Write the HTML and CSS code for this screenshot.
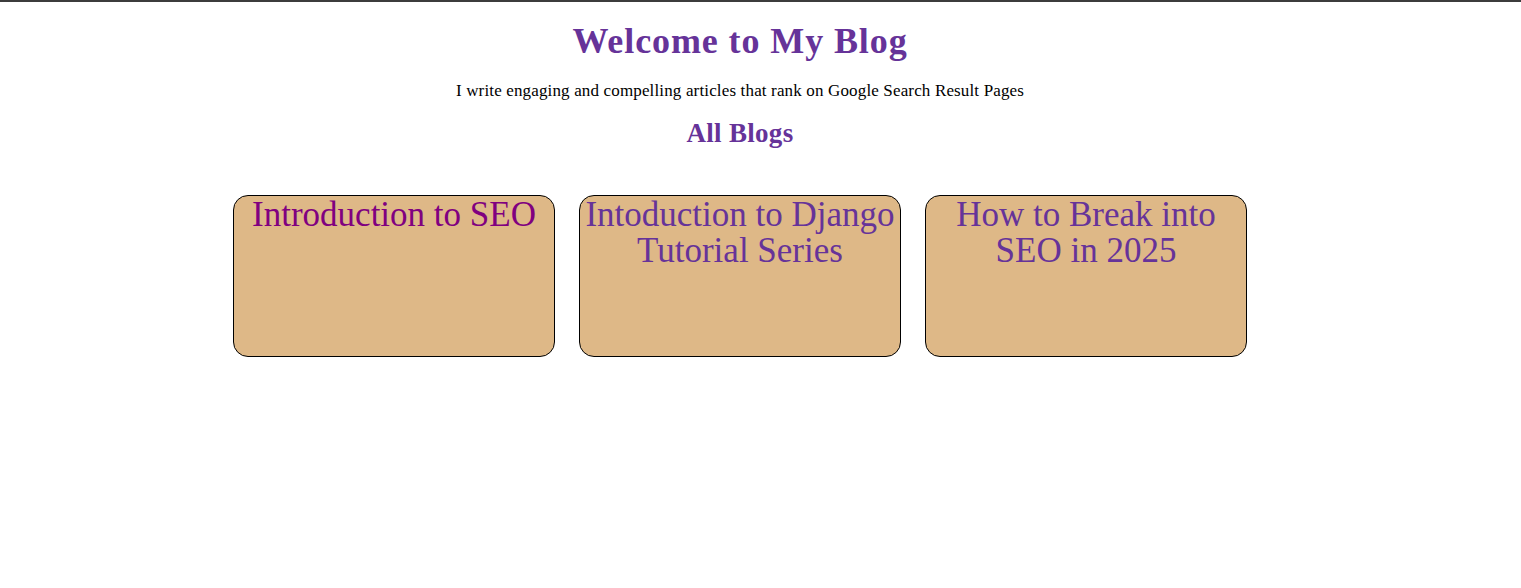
FILE: index.html
```html
<!DOCTYPE html>
<html lang="en">
<head>
<meta charset="utf-8">
<title>My Blog</title>
<link rel="stylesheet" href="styles.css">
</head>
<body>
<div class="page">
  <header class="hero">
    <h1 class="hero-title">Welcome to My Blog</h1>
    <p class="hero-sub">I write engaging and compelling articles that rank on Google Search Result Pages</p>
    <h2 class="section-title">All Blogs</h2>
  </header>
  <main class="cards">
    <div class="card"><a class="card-title visited" href="#">Introduction to SEO</a></div>
    <div class="card"><a class="card-title" href="#">Intoduction to Django Tutorial Series</a></div>
    <div class="card"><a class="card-title" href="#">How to Break into SEO in 2025</a></div>
  </main>
</div>
</body>
</html>
```
FILE: styles.css
```css
html, body {
  margin: 0;
  padding: 0;
  background: #ffffff;
}
body {
  border-top: 2px solid #3c3c3c;
  font-family: "Liberation Serif", "Times New Roman", serif;
  color: #000;
}
.page {
  width: 1480px;
}
.hero {
  display: flex;
  flex-direction: column;
  align-items: center;
  text-align: center;
}
.hero-title {
  margin: 19px 0 0;
  font-size: 36px;
  line-height: 40px;
  letter-spacing: 0.9px;
  font-weight: bold;
  color: #663399;
}
.hero-sub {
  margin: 20px 0 0;
  font-size: 17px;
  line-height: 20px;
  letter-spacing: 0.15px;
}
.section-title {
  margin: 17px 0 0;
  font-size: 27px;
  line-height: 30px;
  letter-spacing: 0.3px;
  font-weight: bold;
  color: #663399;
}
.cards {
  display: flex;
  justify-content: center;
  gap: 24px;
  margin-top: 47px;
}
.card {
  box-sizing: border-box;
  width: 322px;
  height: 162px;
  border: 1px solid #000;
  border-radius: 15px;
  background: #deb887;
  padding-top: 1px;
  text-align: center;
}
.card-title {
  display: block;
  font-size: 35px;
  line-height: 36px;
  color: #663399;
  text-decoration: none;
}
.card-title.visited {
  color: #800080;
}
```
